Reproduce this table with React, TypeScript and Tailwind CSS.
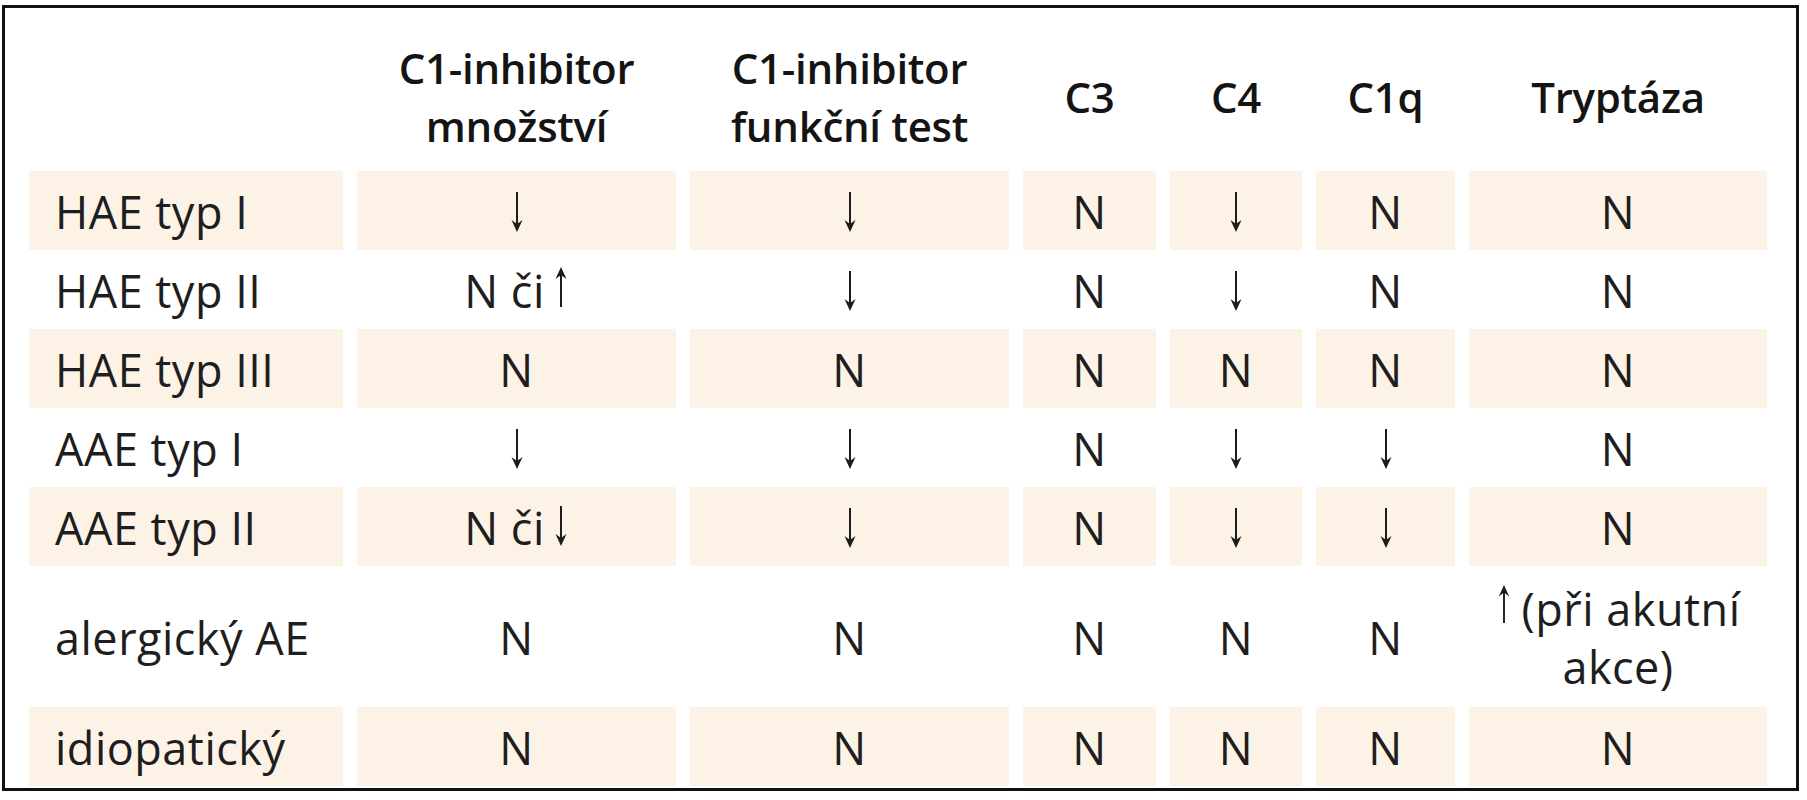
import React from "react";

const Arrow = ({ dir, className = "" }: { dir: "up" | "down"; className?: string }) => (
  <svg
    width="16"
    height="40"
    viewBox="0 0 16 40"
    className={`inline-block shrink-0 ${dir === "up" ? "rotate-180" : ""} ${className}`}
  >
    <line x1="8" y1="0" x2="8" y2="36" stroke="#1c1c1c" strokeWidth="2" />
    <path d="M2.5 28 L8 40 L13.5 28 L8 32 Z" fill="#1c1c1c" />
  </svg>
);

type Val = "N" | "down" | "up" | "Nup" | "Ndown" | "acute";

const Value = ({ v }: { v: Val }) => {
  if (v === "N") return <span>N</span>;
  if (v === "down") return <Arrow dir="down" />;
  if (v === "up") return <Arrow dir="up" />;
  if (v === "Nup")
    return (
      <span className="inline-flex items-center gap-[8px]">
        N či <Arrow dir="up" className="-mt-[8px]" />
      </span>
    );
  if (v === "Ndown")
    return (
      <span className="inline-flex items-center gap-[8px]">
        N či <Arrow dir="down" className="-mt-[4px]" />
      </span>
    );
  return (
    <div className="leading-[58px]">
      <div className="flex items-center justify-center gap-[10px]">
        <Arrow dir="up" className="h-[38px] -mt-[10px]" />
        <span>(při akutní</span>
      </div>
      <div>akce)</div>
    </div>
  );
};

const rows: { label: string; vals: Val[]; shaded: boolean; tall?: boolean }[] = [
  { label: "HAE typ I", vals: ["down", "down", "N", "down", "N", "N"], shaded: true },
  { label: "HAE typ II", vals: ["Nup", "down", "N", "down", "N", "N"], shaded: false },
  { label: "HAE typ III", vals: ["N", "N", "N", "N", "N", "N"], shaded: true },
  { label: "AAE typ I", vals: ["down", "down", "N", "down", "down", "N"], shaded: false },
  { label: "AAE typ II", vals: ["Ndown", "down", "N", "down", "down", "N"], shaded: true },
  { label: "alergický AE", vals: ["N", "N", "N", "N", "N", "acute"], shaded: false, tall: true },
  { label: "idiopatický", vals: ["N", "N", "N", "N", "N", "N"], shaded: true },
];

const headers = [
  ["C1-inhibitor", "množství"],
  ["C1-inhibitor", "funkční test"],
  ["C3"],
  ["C4"],
  ["C1q"],
  ["Tryptáza"],
];

export default function App() {
  return (
    <div
      className="min-h-screen bg-white pl-[2px] pt-[5px] text-[#1e1e1e]"
      style={{ fontFamily: "'Open Sans', 'DejaVu Sans', sans-serif" }}
    >
      <div className="w-[1797px] border-[3px] border-[#111] pl-[24px] pb-[2px]">
        <div className="grid grid-cols-[314px_319px_319px_133px_132px_139px_298px] gap-x-[14px] text-[45px] tracking-[0.5px]">
          {/* header */}
          <div className="h-[163px]" />
          {headers.map((h, i) => (
            <div
              key={i}
              className="h-[163px] flex flex-col items-center justify-center pt-[14px] text-[42px] font-semibold leading-[58px] text-[#141414] tracking-[-0.3px]"
            >
              {h.map((line, j) => (
                <span key={j}>{line}</span>
              ))}
            </div>
          ))}

          {rows.map((r, i) => (
            <React.Fragment key={i}>
              <div
                className={`${r.tall ? "h-[141px]" : "h-[79px]"} ${
                  r.shaded ? "bg-[#fdf2e6]" : ""
                } flex items-center pl-[26px] pt-[2px]`}
              >
                {r.label}
              </div>
              {r.vals.map((v, j) => (
                <div
                  key={j}
                  className={`${r.tall ? "h-[141px]" : "h-[79px]"} ${
                    r.shaded ? "bg-[#fdf2e6]" : ""
                  } flex items-center justify-center pt-[2px] text-center`}
                >
                  <Value v={v} />
                </div>
              ))}
            </React.Fragment>
          ))}
        </div>
      </div>
    </div>
  );
}
